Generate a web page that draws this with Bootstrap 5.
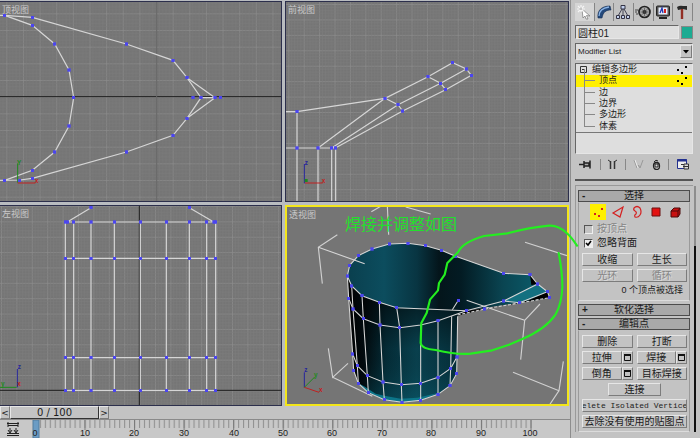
<!DOCTYPE html>
<html lang="zh-CN">
<head>
<meta charset="utf-8">
<meta name="viewport" content="width=device-width, initial-scale=1">
<title>圆柱01</title>
<link href="https://cdn.jsdelivr.net/npm/bootstrap@5.3.0/dist/css/bootstrap.min.css" rel="stylesheet">
<style>
:root{--face:#c3c3c3;--hi:#e6e6e6;--lo:#7c7c7c;--ink:#1c1c1c}
body{background:var(--face);color:var(--ink);font-family:"Liberation Sans","Noto Sans CJK SC",sans-serif;font-size:10px;line-height:12px}
button,input,select{font:inherit;color:inherit}
svg{display:block}
.views{display:grid;grid-template-columns:282fr 284fr;grid-template-rows:1fr 1fr;gap:3px;padding:1px 1px 0 0;background:#b9bcc0}
.view{background:#757575;border:1px solid #2c2f4c;min-height:120px}
.view-left{border-left:0}
.view-active{border:2px solid #f3e61a}
.view svg{position:absolute;inset:0;width:100%;height:100%}
.view .label{position:absolute;left:2px;top:2px;color:#c9c9c9;font-size:9px;z-index:1}
.view .note{position:absolute;left:58px;top:8px;color:#22e02c;font-size:16px;line-height:20px;z-index:2}
.view .ink{overflow:visible;z-index:3;pointer-events:none}
.wire{fill:none;stroke:#d6d6d6;stroke-width:3.6}
.dots{fill:none;stroke:none;marker:url(#vertex)}
.axis{stroke:#1d1d1d;stroke-width:3;fill:none}
.tri{fill:none;stroke-width:3}
.view text{font-size:19px;font-weight:bold}
.slider{height:13px;font-family:"DejaVu Sans","Liberation Sans",sans-serif;line-height:10px}
.slider button,.raised{background:var(--face);border:1px solid;border-color:var(--hi) var(--lo) var(--lo) var(--hi);padding:0}
.slider .step{width:10px;font-size:9px}
.slider .thumb{width:89px;border-color:var(--hi) #333 #333 var(--hi)}
.track{border-top:1px solid #8a8a8a;background:#c8c8c8}
.track text{font-size:9px;fill:#222}
.side{width:130px;padding:3px 7px 3px 4px;border-left:1px solid #8d8d8d}
.tabs{height:18px;margin-bottom:4px}
.tabs button{border:0;border-right:1px solid #858585;background:none;padding:0 1px;flex:1 1 0}
.tabs button:first-child{background:#d5d5d5}
.sunk{border:1px solid;border-color:#666 var(--hi) var(--hi) #666;background:#dedede;border-radius:0}
.name{height:14px;padding:0 2px;width:104px}
.swatch{width:12px;height:13px;background:#1cab92;border:1px solid #888}
.picker{height:17px;margin:4px 0 3px}
.picker select{appearance:none;width:100%;height:100%;padding:0 14px 0 2px;font-size:8px;line-height:14px}
.picker .arrow{position:absolute;right:1px;top:2px;width:12px;height:13px;pointer-events:none}
.stack{height:91px;font-size:9px}
.stack ul{display:grid;grid-auto-rows:1fr;height:69px;border-bottom:1px solid #777}
.stack li{padding-left:23px;line-height:11px;position:relative}
.stack li:first-child{padding-left:16px}
.stack li:not(:first-child)::before{content:"";position:absolute;left:8px;top:-6px;width:11px;height:12px;border-left:1px solid #888;border-bottom:1px solid #888}
.stack .picked{background:#fff000}
.stack .box{position:absolute;left:4px;top:2px;width:7px;height:7px}
.stack .pts{position:absolute;right:3px;top:0;width:14px;height:11px}
.tools{height:20px;margin:0 0 5px}
.tools button{background:none;border:0;padding:0}
.tools i{width:1px;height:11px;background:#888}
.rule{height:2px;background:#555;margin:0 0 4px}
.roll{position:relative;padding:4px 3px 0 2px;border-left:1px solid #999;border-top:1px solid #999}
.roll::after{content:"";position:absolute;right:-3px;top:0;bottom:0;width:2px;background:linear-gradient(#8d8d8d 0 60px,#111 60px)}
.group{border:1px solid;border-color:transparent #9a9a9a #dcdcdc #9a9a9a;padding:0 2px 0 3px;margin-bottom:3px}
.head{display:flex;align-items:center;width:100%;height:12px;border:1px solid #4c4c4c;background:#a9a9a9;padding:0 3px;line-height:10px}
.head b{width:8px;text-align:left}
.head span{flex:1;padding-right:8px}
.modes{height:16px;margin:1px 0 2px;padding-left:8px}
.modes button{width:16px;height:16px;border:0;background:none;padding:0}
.modes .on{background:#fff000}
.check{height:14px;padding-left:2px}
.check input{appearance:none;width:9px;height:9px;margin:0 4px 0 0;background:#ddd;border:1px solid;border-color:#555 #eee #eee #555}
.check input:checked{background:#eee url("data:image/svg+xml,%3Csvg xmlns='http://www.w3.org/2000/svg' viewBox='0 0 7 7'%3E%3Cpath d='M1 3l2 2 3-4' fill='none' stroke='%23000' stroke-width='1.6'/%3E%3C/svg%3E") center/7px 7px}
.check input:disabled{background:var(--face);opacity:1}
.off,.raised:disabled{color:#858585;text-shadow:1px 1px #dcdcdc}
.pair{display:grid;grid-template-columns:1fr 1fr;gap:3px 4px}
.actions{margin-top:3px}
.raised{height:13px;line-height:11px;white-space:nowrap;overflow:hidden}
.opt{width:11px}
.opt svg{width:7px;height:7px;margin:auto}
.mono{font-family:"Liberation Mono",monospace;font-size:8px;display:flex;justify-content:center}
.status{font-size:9px;margin-top:2px}
.fold{margin-top:2px}
.edit{padding-top:4px;margin-bottom:0;display:grid;gap:3px;padding-bottom:3px}
</style>
<script src="https://cdn.jsdelivr.net/npm/bootstrap@5.3.0/dist/js/bootstrap.bundle.min.js"></script>
</head>
<body class="d-flex min-vh-100">
<main class="d-flex flex-column flex-grow-1">
  <div class="views flex-grow-1">
    <section class="view view-left position-relative" aria-label="顶视图">
      <span class="label">顶视图</span>
      <svg viewBox="0 6 843 597" preserveAspectRatio="xMidYMid slice">
        <defs>
          <marker id="vertex" markerUnits="userSpaceOnUse" markerWidth="10" markerHeight="10" refX="5" refY="5"><rect width="10" height="10" fill="#4b45f0"/></marker>
          <pattern id="gridTop" x="19" y="40" width="49.9" height="50" patternUnits="userSpaceOnUse"><path d="M1 0V50M0 1H50" stroke="#8b8b8b" stroke-width="2.6"/><path d="M10 0V50M20 0V50M30 0V50M40 0V50M0 10H50M0 20H50M0 30H50M0 40H50" stroke="#7b7b7b" stroke-width="2"/></pattern>
          <pattern id="gridFront" x="13" y="12" width="46.2" height="46.3" patternUnits="userSpaceOnUse"><path d="M1 0V47M0 1H47" stroke="#8b8b8b" stroke-width="2.6"/><path d="M10 0V47M19 0V47M28 0V47M37 0V47M0 10H47M0 19H47M0 28H47M0 37H47" stroke="#7b7b7b" stroke-width="2"/></pattern>
          <pattern id="gridLeft" x="3" y="9" width="46.2" height="46.1" patternUnits="userSpaceOnUse"><path d="M1 0V47M0 1H47" stroke="#8b8b8b" stroke-width="2.6"/><path d="M10 0V47M19 0V47M28 0V47M37 0V47M0 10H47M0 19H47M0 28H47M0 37H47" stroke="#7b7b7b" stroke-width="2"/></pattern>
        </defs>
        <rect y="6" width="843" height="597" fill="url(#gridTop)"/>
        <path class="axis" d="M0 290H843"/><path d="M470 6V603" stroke="#666" stroke-width="3"/>
        <g class="wire">
          <path d="M0 46L14 46L97 52L379 132L519 181L561 233L603 293L561 355L519 406L379 456L97 535L60 540L0 541"/>
          <path d="M14 46L97 76L164 132L207 210L221 293L207 378L164 456L97 511L14 541"/>
          <path d="M561 233L645 293L561 355M603 293H645"/>
        </g>
        <path class="tri" stroke="#1d8a1d" d="M53 548V490"/><path class="tri" stroke="#c02020" d="M53 549H106"/>
        <text x="51" y="494" fill="#1d8a1d">Y</text><text x="104" y="549" fill="#c02020">x</text>
        <path class="dots" d="M14 46L97 52L379 132L519 181L561 233L603 293L645 293L661 293L579 293L561 355L519 406L379 456L97 535L58 542L14 541L97 511L164 456L207 378L221 293L207 210L164 132L97 76"/>
      </svg>
    </section>
    <section class="view position-relative" aria-label="前视图">
      <span class="label">前视图</span>
      <svg viewBox="6 6 846 597" preserveAspectRatio="xMidYMid slice">
        <rect x="6" y="6" width="846" height="597" fill="url(#gridFront)"/>
        <g class="wire">
          <path d="M6 335H39L303 295L432 230L506 188L547 207L562 226L485 269L356 333L154 444"/>
          <path d="M303 295L342 314L356 333M432 230L470 250L485 269M547 207L470 250L342 314L143 444M303 295L102 444M6 444H155"/>
          <path d="M39 335V603M102 444V603M143 444V603M155 444V603"/>
        </g>
        <path class="tri" stroke="#25259c" d="M61 550V492"/><path class="tri" stroke="#c02020" d="M63 549H116"/>
        <text x="62" y="494" fill="#25259c">z</text><text x="113" y="548" fill="#c02020">x</text><rect x="62" y="537" width="9" height="9" fill="#1d8a1d"/>
        <path class="dots" d="M39 335L303 295L432 230L506 188L547 207L562 226L485 269L470 250L342 314L356 333L155 444L142 444L102 444L39 444"/>
      </svg>
    </section>
    <section class="view view-left position-relative" aria-label="左视图">
      <span class="label">左视图</span>
      <svg viewBox="0 9 843 597" preserveAspectRatio="xMidYMid slice">
        <rect y="9" width="843" height="597" fill="url(#gridLeft)"/>
        <path class="axis" d="M0 562H843M418 9V606"/>
        <g class="wire">
          <path d="M196 57V562M221 57V562M273 57V562M343 57V562M421 57V562M499 57V562M568 57V562M620 57V562M647 57V562"/>
          <path d="M196 57H647M196 166H647M196 464H647M196 562H647M273 14L203 56M568 14L640 56"/>
        </g>
        <path class="tri" stroke="#25259c" d="M52 553V498"/><path class="tri" stroke="#1d8a1d" d="M0 553H50"/>
        <text x="53" y="497" fill="#25259c">z</text><text x="3" y="548" fill="#1d8a1d">y</text><text x="52" y="550" fill="#c02020">x</text>
        <path class="dots" d="M273 14H568M196 57H221H273H343H421H499H568H620H647M642 57H202"/>
        <path class="dots" d="M196 166H221H273H343H421H499H568H620H647V464H620H568H499H421H343H273H221H196V562H221H273H343H421H499H568H620H647"/>
      </svg>
    </section>
    <section class="view view-active position-relative" aria-label="透视图">
      <span class="label">透视图</span>
      <span class="note">焊接并调整如图</span>
      <svg viewBox="9 12 840 591" preserveAspectRatio="xMidYMid slice">
        <defs>
          <linearGradient id="inside" gradientUnits="userSpaceOnUse" x1="190" y1="0" x2="740" y2="0"><stop offset="0" stop-color="#0a3f4e"/><stop offset=".2" stop-color="#0c4d5e"/><stop offset=".38" stop-color="#083542"/><stop offset=".5" stop-color="#04151b"/><stop offset=".62" stop-color="#031b23"/><stop offset=".85" stop-color="#0a4552"/><stop offset="1" stop-color="#0a5664"/></linearGradient>
          <linearGradient id="outside" gradientUnits="userSpaceOnUse" x1="190" y1="0" x2="525" y2="0"><stop offset="0" stop-color="#000"/><stop offset=".14" stop-color="#020a0e"/><stop offset=".35" stop-color="#05303c"/><stop offset=".62" stop-color="#0a4756"/><stop offset="1" stop-color="#06323e"/></linearGradient>
          <linearGradient id="shade" x1="0" y1="0" x2="0" y2="1"><stop offset="0" stop-color="#000" stop-opacity=".65"/><stop offset=".5" stop-color="#000" stop-opacity=".1"/><stop offset="1" stop-color="#0b6476" stop-opacity=".35"/></linearGradient>
        </defs>
        <g fill="none" stroke="#d0d0d0" stroke-width="3.4">
          <path d="M262 26L290 10M310 8L314 95M365 12L440 33M160 95L103 133L115 242M723 118L849 158M722 352L710 470M722 352L768 303M687 508L825 563L838 475M825 563L797 605M133 436L146 523L192 481M146 523L265 580"/>
        </g>
        <path fill="url(#outside)" d="M190 219L203 249L234 278L286 298L338 314L547 323L521 340L519 462L518 512L498 548L462 574L410 592L354 598L301 590L253 569L223 541L209 503L206 453L194 286Z"/>
        <path fill="url(#shade)" d="M234 278L286 298L338 314L547 323L521 340L519 462L518 512L498 548L462 574L410 592L354 598L301 590L253 569Z"/>
        <path fill="#0c7589" d="M223 541L240 550L275 572L301 578L350 587L400 584L462 570L410 592L354 598L301 590L253 569Z"/>
        <path fill="url(#inside)" d="M190 219L197 187L223 158L264 138L316 123L372 121L425 128L472 142L515 160L659 211L738 215L761 243L790 266L797 284L707 299L547 323L338 314L286 298L234 278L203 249Z"/>
        <path fill="#000" d="M738 215L761 243L742 246ZM515 340L547 323L660 308L735 292L790 266L797 284L602 318Z"/>
        <path fill="#137080" d="M659 294L761 243L790 266L707 299Z"/>
        <g fill="none" stroke="#d6d6d6" stroke-width="3.2">
          <path d="M103 133L242 182M548 292L722 352"/>
          <path d="M190 219L197 187L223 158L264 138L316 123L372 121L425 128L472 142L515 160L659 211L738 215L761 243L790 266L797 284M190 219L203 249L234 278L286 298L338 314L547 323L659 294L761 243M659 294L707 299L790 266"/>
          <path d="M190 219L194 286L206 453L209 503L223 541L253 569L301 590L354 598L410 592L462 574L498 548L518 512L519 462L521 340"/>
          <path d="M194 286L207 318L238 347L288 366L347 374L410 366L462 353L547 323M523 292L505 320"/>
          <path d="M206 453L220 488L250 518L297 537L352 545L410 541L462 523L500 496L519 462"/>
          <path d="M203 249L207 318L220 488L223 541M234 278L238 347L250 518L253 569M286 298L288 366L297 537L301 590M338 314L347 374L352 545L354 598M410 366V592M462 353V574M503 340L500 496L498 548"/>
          <path d="M521 336L602 318L797 284" stroke-dasharray="9 5"/>
        </g>
        <path class="tri" stroke="#25259c" d="M61 553V508"/><path class="tri" stroke="#1d8a1d" d="M61 553L92 522"/><path class="tri" stroke="#c02020" d="M61 553L105 568"/>
        <text x="61" y="507" fill="#25259c">z</text><text x="90" y="523" fill="#1d8a1d">y</text><text x="105" y="568" fill="#c02020">x</text>
        <path class="dots" d="M190 219L197 187L223 158L264 138L316 123L372 121L425 128L472 142L515 160L659 211L738 215L761 243L790 266L797 284L707 299L659 294L602 318L547 323L523 292L338 314L286 298L234 278L203 249L194 286L207 318L238 347L288 366L347 374L462 353M206 453L220 488L250 518L297 537L352 545L410 541L462 523L500 496L519 462L518 512L498 548L462 574L410 592L354 598L301 590L253 569L223 541L209 503"/>
      </svg>
      <svg class="ink" viewBox="9 12 840 591" preserveAspectRatio="xMidYMid slice" aria-hidden="true">
        <path d="M879 128Q862 102 848 90Q822 66 795 68Q735 74 670 91L600 99Q535 118 522 148L490 180L482 215L465 240L462 262L438 290L428 330L412 360L410 420Q412 438 455 441Q520 456 560 452L625 442L675 425L715 408Q785 378 815 334Q834 300 835 250Q835 205 824 150" fill="none" stroke="#24ee20" stroke-width="6.5" stroke-linejoin="round" stroke-linecap="round"/>
      </svg>
    </section>
  </div>
  <div class="slider d-flex">
    <button class="step" type="button">&lt;</button>
    <button class="thumb" type="button">0 / 100</button>
    <button class="step" type="button">&gt;</button>
  </div>
  <div class="track">
    <svg class="w-100" viewBox="0 0 570 18" role="img" aria-label="0 – 100">
      <defs><pattern id="ticks" x="34.9" width="4.956" height="18" patternUnits="userSpaceOnUse"><path d="M.6 0V8" stroke="#8b8b8b"/></pattern>
      <pattern id="tens" x="34.9" width="49.56" height="18" patternUnits="userSpaceOnUse"><path d="M.6 0V10" stroke="#777"/></pattern></defs>
      <rect x="34" width="498" height="10" fill="url(#ticks)"/><rect x="34" width="498" height="10" fill="url(#tens)"/>
      <rect x="33" width="6" height="18" fill="#6b9cc4" stroke="#537c9e"/>
      <g fill="none" stroke="#222"><path d="M7 3.500H19M8 5.500H18M7 15.500H19M8 2V7M18 2V7M10 8V12M16 8V12M8 10L10 13L12 10M14 10L16 13L18 10M7 13.500H19"/></g>
      <g text-anchor="middle"><text x="35" y="16">0</text><text x="85" y="16">10</text><text x="134" y="16">20</text><text x="184" y="16">30</text><text x="234" y="16">40</text><text x="283" y="16">50</text><text x="332" y="16">60</text><text x="382" y="16">70</text><text x="431" y="16">80</text><text x="481" y="16">90</text><text x="530" y="16">100</text></g>
    </svg>
  </div>
</main>

<aside class="side flex-shrink-0">
  <div class="tabs d-flex">
    <button type="button" aria-label="创建"><svg viewBox="0 0 16 16" width="16" height="16"><path d="M6 5L14 12L10.500 11.500L12 15L10 15L9 12L7 14Z" fill="#fff" stroke="#777" stroke-width=".7"/><path d="M5 1V8M1 5H9M2 2L8 8M8 2L2 8" stroke="#f5f5f5" stroke-width="1.200"/><path d="M5 3V6M3 5H6" stroke="#999" stroke-width=".6"/></svg></button>
    <button type="button" aria-label="修改"><svg viewBox="0 0 16 16" width="16" height="16"><path d="M2 14C1 6 6 2 14 2L15 6C10 6 7 8 6 14Z" fill="#254a7c" stroke="#142c50" stroke-width=".6"/><path d="M3 12C3 7 6 4 13 3" stroke="#8cb5e6" fill="none" stroke-width="1.300"/></svg></button>
    <button type="button" aria-label="层次"><svg viewBox="0 0 16 16" width="16" height="16"><path d="M8 4V12M7 5L3 12M9 5L13 12" stroke="#445" stroke-width="1"/><g fill="#c3d1ee" stroke="#334"><path d="M6 1.500H10V5H6ZM1.500 11.500H4.500V14.500H1.500ZM6.500 11.500H9.500V14.500H6.500ZM11.500 11.500H14.500V14.500H11.500Z"/></g></svg></button>
    <button type="button" aria-label="运动"><svg viewBox="0 0 16 16" width="16" height="16"><circle cx="9.500" cy="8" r="5.500" fill="#aaa" stroke="#222" stroke-width="1.700"/><circle cx="9.500" cy="8" r="2" fill="#222"/><path d="M9.500 4V12M5.500 8H13.500M6.500 5L12.500 11M12.500 5L6.500 11" stroke="#444" stroke-width=".6"/><path d="M0 6H3M0 8H2M1 10H3" stroke="#444"/></svg></button>
    <button type="button" aria-label="显示"><svg viewBox="0 0 16 16" width="16" height="16"><rect x="1.500" y="2" width="13" height="10" rx="1" fill="#555" stroke="#222"/><rect x="3.500" y="3.500" width="9" height="7" fill="#e8eefc"/><path d="M5 9L7 4L8 9" fill="none" stroke="#2338ad" stroke-width="1.300"/><path d="M9 5H11V9H9Z" fill="#d42020"/><path d="M4 14H12" stroke="#222" stroke-width="2"/></svg></button>
    <button type="button" aria-label="工具"><svg viewBox="0 0 16 16" width="16" height="16"><path d="M3 3Q6 1 9 2L13 2V6L9 5L4 6Z" fill="#292929"/><path d="M8 5V15" stroke="#922e24" stroke-width="2.400"/></svg></button>
  </div>
  <div class="d-flex align-items-center justify-content-between">
    <input class="sunk name" type="text" value="圆柱01" aria-label="名称">
    <button class="swatch p-0" type="button" aria-label="颜色"></button>
  </div>
  <div class="picker position-relative">
    <select class="sunk" aria-label="Modifier List"><option>Modifier List</option></select>
    <span class="arrow raised"><svg viewBox="0 0 10 11"><path d="M2 4H8L5 7.500Z"/></svg></span>
  </div>
  <div class="stack sunk">
    <ul class="list-unstyled m-0">
      <li><svg class="box" viewBox="0 0 7 7"><path d="M.5.5H6.500V6.500H.5ZM2 3.500H5" fill="none" stroke="#333"/></svg>编辑多边形<svg class="pts" viewBox="0 0 14 11"><path d="M2 5h2v2H2zM6 8h2v2H6zM10 2h2v2h-2z"/></svg></li>
      <li class="picked">顶点<svg class="pts" viewBox="0 0 14 11"><path d="M2 5h2v2H2zM6 8h2v2H6zM10 2h2v2h-2z"/></svg></li>
      <li>边</li><li>边界</li><li>多边形</li><li>体素</li>
    </ul>
  </div>
  <div class="tools d-flex align-items-center justify-content-between px-1">
    <button type="button" aria-label="锁定堆栈"><svg width="13" height="11" viewBox="0 0 13 11"><path d="M0 5.500H5M5 2V9M5 4H10V7H5M11 1.500V9.500" stroke="#222" stroke-width="1.500" fill="#aaa"/></svg></button><i></i>
    <button type="button" aria-label="显示最终结果"><svg width="9" height="11" viewBox="0 0 9 11"><path d="M2.500 2V10M6.500 2V10" stroke="#333" stroke-width="1.500"/><path d="M0 1L3 3M9 1L6 3" stroke="#333"/></svg></button><i></i>
    <button type="button" aria-label="使唯一" disabled><svg width="11" height="11" viewBox="0 0 11 11"><path d="M1 1L4 9L5.500 6L7 9L10 1" stroke="#999" fill="none"/><path d="M2 1L5 9" stroke="#eee"/></svg></button>
    <button type="button" aria-label="移除"><svg width="9" height="11" viewBox="0 0 9 11"><ellipse cx="4.500" cy="7" rx="3" ry="3.500" fill="#ddd" stroke="#222" stroke-width="1.300"/><path d="M2 3Q4 0 6 2M3 5H6V8H3Z" stroke="#222" fill="none"/></svg></button><i></i>
    <button type="button" aria-label="配置"><svg width="12" height="11" viewBox="0 0 12 11"><path d="M.5.5H9.500V9.500H.5Z" fill="#eee" stroke="#22308f"/><path d="M0 1.500H10" stroke="#22308f" stroke-width="2"/><path d="M4 5.500H7M6 7.500H11M7 5V10H11.500V5Z" stroke="#333" fill="#ddd"/></svg></button>
  </div>
  <div class="rule"></div>

  <div class="roll">
    <button class="head" type="button"><b>-</b><span>选择</span></button>
    <div class="group">
      <div class="modes d-flex gap-1">
        <button class="on" type="button" aria-label="顶点"><svg viewBox="0 0 16 16"><path d="M4 9h2v2H4zM8 11h2v2H8zM11 4h2v2h-2z" fill="#d42020"/></svg></button>
        <button type="button" aria-label="边"><svg viewBox="0 0 16 16"><path d="M3 9L13 3L10 13Z" fill="none" stroke="#d42020" stroke-width="1.200"/></svg></button>
        <button type="button" aria-label="边界"><svg viewBox="0 0 16 16"><path d="M4 4Q7 1 10 4Q12 8 10 11Q8 14 5 13Q4 11 6 10Q7 8 5 7Q3 6 4 4Z" fill="none" stroke="#d42020" stroke-width="1.200"/></svg></button>
        <button type="button" aria-label="多边形"><svg viewBox="0 0 16 16"><path d="M2 4H10V12H2Z" fill="#e31212" stroke="#6a1111"/></svg></button>
        <button type="button" aria-label="体素"><svg viewBox="0 0 16 16"><path d="M1 7L4 4H10V10L8 13H1Z" fill="#c81010" stroke="#4b0a0a"/><path d="M1 7H8V13M8 7L10 4" fill="none" stroke="#4b0a0a"/></svg></button>
      </div>
      <label class="check off d-flex align-items-center"><input type="checkbox" disabled>按顶点</label>
      <label class="check d-flex align-items-center"><input type="checkbox" checked>忽略背面</label>
      <div class="pair actions">
        <button class="raised" type="button">收缩</button><button class="raised" type="button">生长</button>
        <button class="raised" type="button" disabled>光环</button><button class="raised" type="button" disabled>循环</button>
      </div>
      <div class="text-end pe-1 pb-1 status">0 个顶点被选择</div>
    </div>
    <button class="head" type="button"><b>+</b><span>软化选择</span></button>
    <button class="head fold" type="button"><b>-</b><span>编辑点</span></button>
    <div class="group edit">
      <div class="pair">
        <button class="raised" type="button">删除</button><button class="raised" type="button">打断</button>
        <div class="d-flex"><button class="raised flex-grow-1" type="button">拉伸</button><button class="raised opt" type="button" aria-label="拉伸设置"><svg viewBox="0 0 7 7"><path d="M.5 1H6.500V6.500H.5Z" fill="none" stroke="#111"/><path d="M0 1H7" stroke="#111" stroke-width="2"/></svg></button></div>
        <div class="d-flex"><button class="raised flex-grow-1" type="button">焊接</button><button class="raised opt" type="button" aria-label="焊接设置"><svg viewBox="0 0 7 7"><path d="M.5 1H6.500V6.500H.5Z" fill="none" stroke="#111"/><path d="M0 1H7" stroke="#111" stroke-width="2"/></svg></button></div>
        <div class="d-flex"><button class="raised flex-grow-1" type="button">倒角</button><button class="raised opt" type="button" aria-label="倒角设置"><svg viewBox="0 0 7 7"><path d="M.5 1H6.500V6.500H.5Z" fill="none" stroke="#111"/><path d="M0 1H7" stroke="#111" stroke-width="2"/></svg></button></div>
        <button class="raised" type="button">目标焊接</button>
      </div>
      <button class="raised w-50 mx-auto d-block" type="button">连接</button>
      <button class="raised w-100 mono" type="button">elete Isolated Vertice</button>
      <button class="raised w-100" type="button">去除没有使用的贴图点</button>
    </div>
  </div>
</aside>
</body>
</html>
